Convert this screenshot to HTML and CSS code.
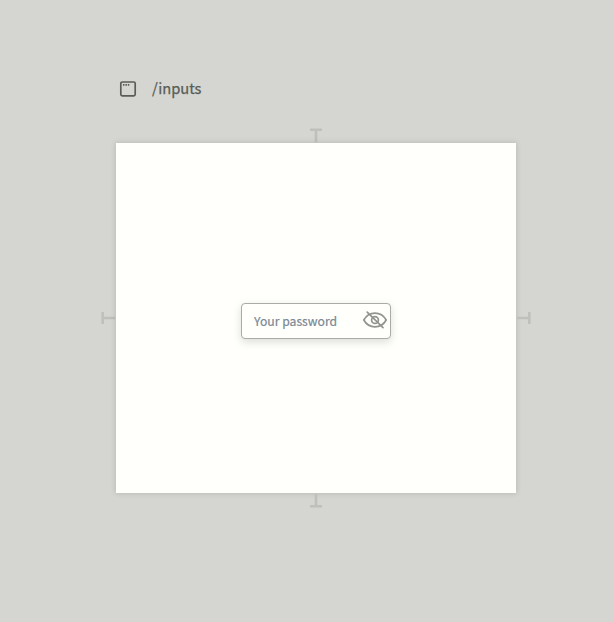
FILE: index.html
```html
<!DOCTYPE html>
<html lang="en">
<head>
<meta charset="utf-8">
<title>Inputs</title>
<link rel="stylesheet" href="styles.css">
</head>
<body>
<header class="header">
  <svg class="window-icon" width="18" height="18" viewBox="0 0 18 18" fill="none" stroke="currentColor">
    <rect x="1.8" y="2" width="14.4" height="13.8" rx="1.5" stroke-width="1.7"/>
    <path d="M4 4.9h1.5M6.4 4.9h1.5M8.8 4.9h1.5" stroke-width="1.6"/>
  </svg>
  <span class="path">/inputs</span>
</header>
<main class="stage">
  <svg class="handle top" width="14" height="15" viewBox="0 0 14 15"><path d="M1 1.7h12M7 1.7V14"/></svg>
  <svg class="handle left" width="15" height="14" viewBox="0 0 15 14"><path d="M1.7 1v12M1.7 7H14"/></svg>
  <section class="canvas">
    <div class="field">
      <input class="password" type="password" placeholder="Your password" aria-label="Your password">
      <svg class="eye" width="26" height="20" viewBox="0 0 26 20" fill="none" stroke="currentColor" stroke-width="1.7" stroke-linecap="round" stroke-linejoin="round">
        <path d="M1.8 10C4.2 5.8 8.2 3.1 13 3.1S21.8 5.8 24.2 10C21.8 14.2 17.8 16.9 13 16.9S4.2 14.2 1.8 10Z"/>
        <circle cx="13" cy="10" r="3.4"/>
        <path d="M5.2 2.2 21 17.6"/>
      </svg>
    </div>
  </section>
  <svg class="handle right" width="15" height="14" viewBox="0 0 15 14"><path d="M13.3 1v12M13.3 7H1"/></svg>
  <svg class="handle bottom" width="14" height="15" viewBox="0 0 14 15"><path d="M1 13.3h12M7 13.3V1"/></svg>
</main>
</body>
</html>
```
FILE: styles.css
```css
* { box-sizing: border-box; }

body {
  margin: 0;
  min-height: 622px;
  padding-top: 77px;
  background: #d5d6d1;
  font-family: "Noto Sans CJK SC", "Noto Sans", sans-serif;
}

.header {
  display: flex;
  align-items: center;
  height: 24px;
  margin-left: 119px;
  gap: 15px;
  color: #5a5c56;
}

.path {
  margin-top: -2px;
  font-size: 14.7px;
  font-weight: 400;
  line-height: 24px;
  -webkit-text-stroke: .25px currentColor;
}

.stage {
  display: grid;
  grid-template: 15px 350px 15px / 15px 400px 15px;
  width: 430px;
  margin: 27px 0 0 101px;
}

.canvas {
  grid-area: 2 / 2;
  display: flex;
  align-items: center;
  justify-content: center;
  padding-top: 6px;
  background: #fffffc;
  box-shadow: 0 0 5px rgba(80, 84, 72, .26);
}

.field {
  display: flex;
  align-items: center;
  width: 150px;
  height: 36px;
  padding: 0 2px 0 12px;
  border: 1px solid #a9aba5;
  border-radius: 4px;
  background: #fffffc;
  box-shadow: 0 3px 9px rgba(80, 84, 72, .2);
}

.password {
  flex: 1;
  min-width: 0;
  padding: 0;
  border: 0;
  outline: 0;
  background: none;
  font: 400 12.2px/20px "Noto Sans CJK SC", "Noto Sans", sans-serif;
}

.password::placeholder {
  color: #7b8794;
  opacity: 1;
  -webkit-text-stroke: .2px #7b8794;
}

.eye {
  flex: none;
  margin-top: -3px;
  color: #92948d;
}

.handle {
  fill: none;
  stroke: #bfc0bb;
  stroke-width: 2.6;
  place-self: center;
}

.top { grid-area: 1 / 2; }
.left { grid-area: 2 / 1; }
.right { grid-area: 2 / 3; }
.bottom { grid-area: 3 / 2; }
```
